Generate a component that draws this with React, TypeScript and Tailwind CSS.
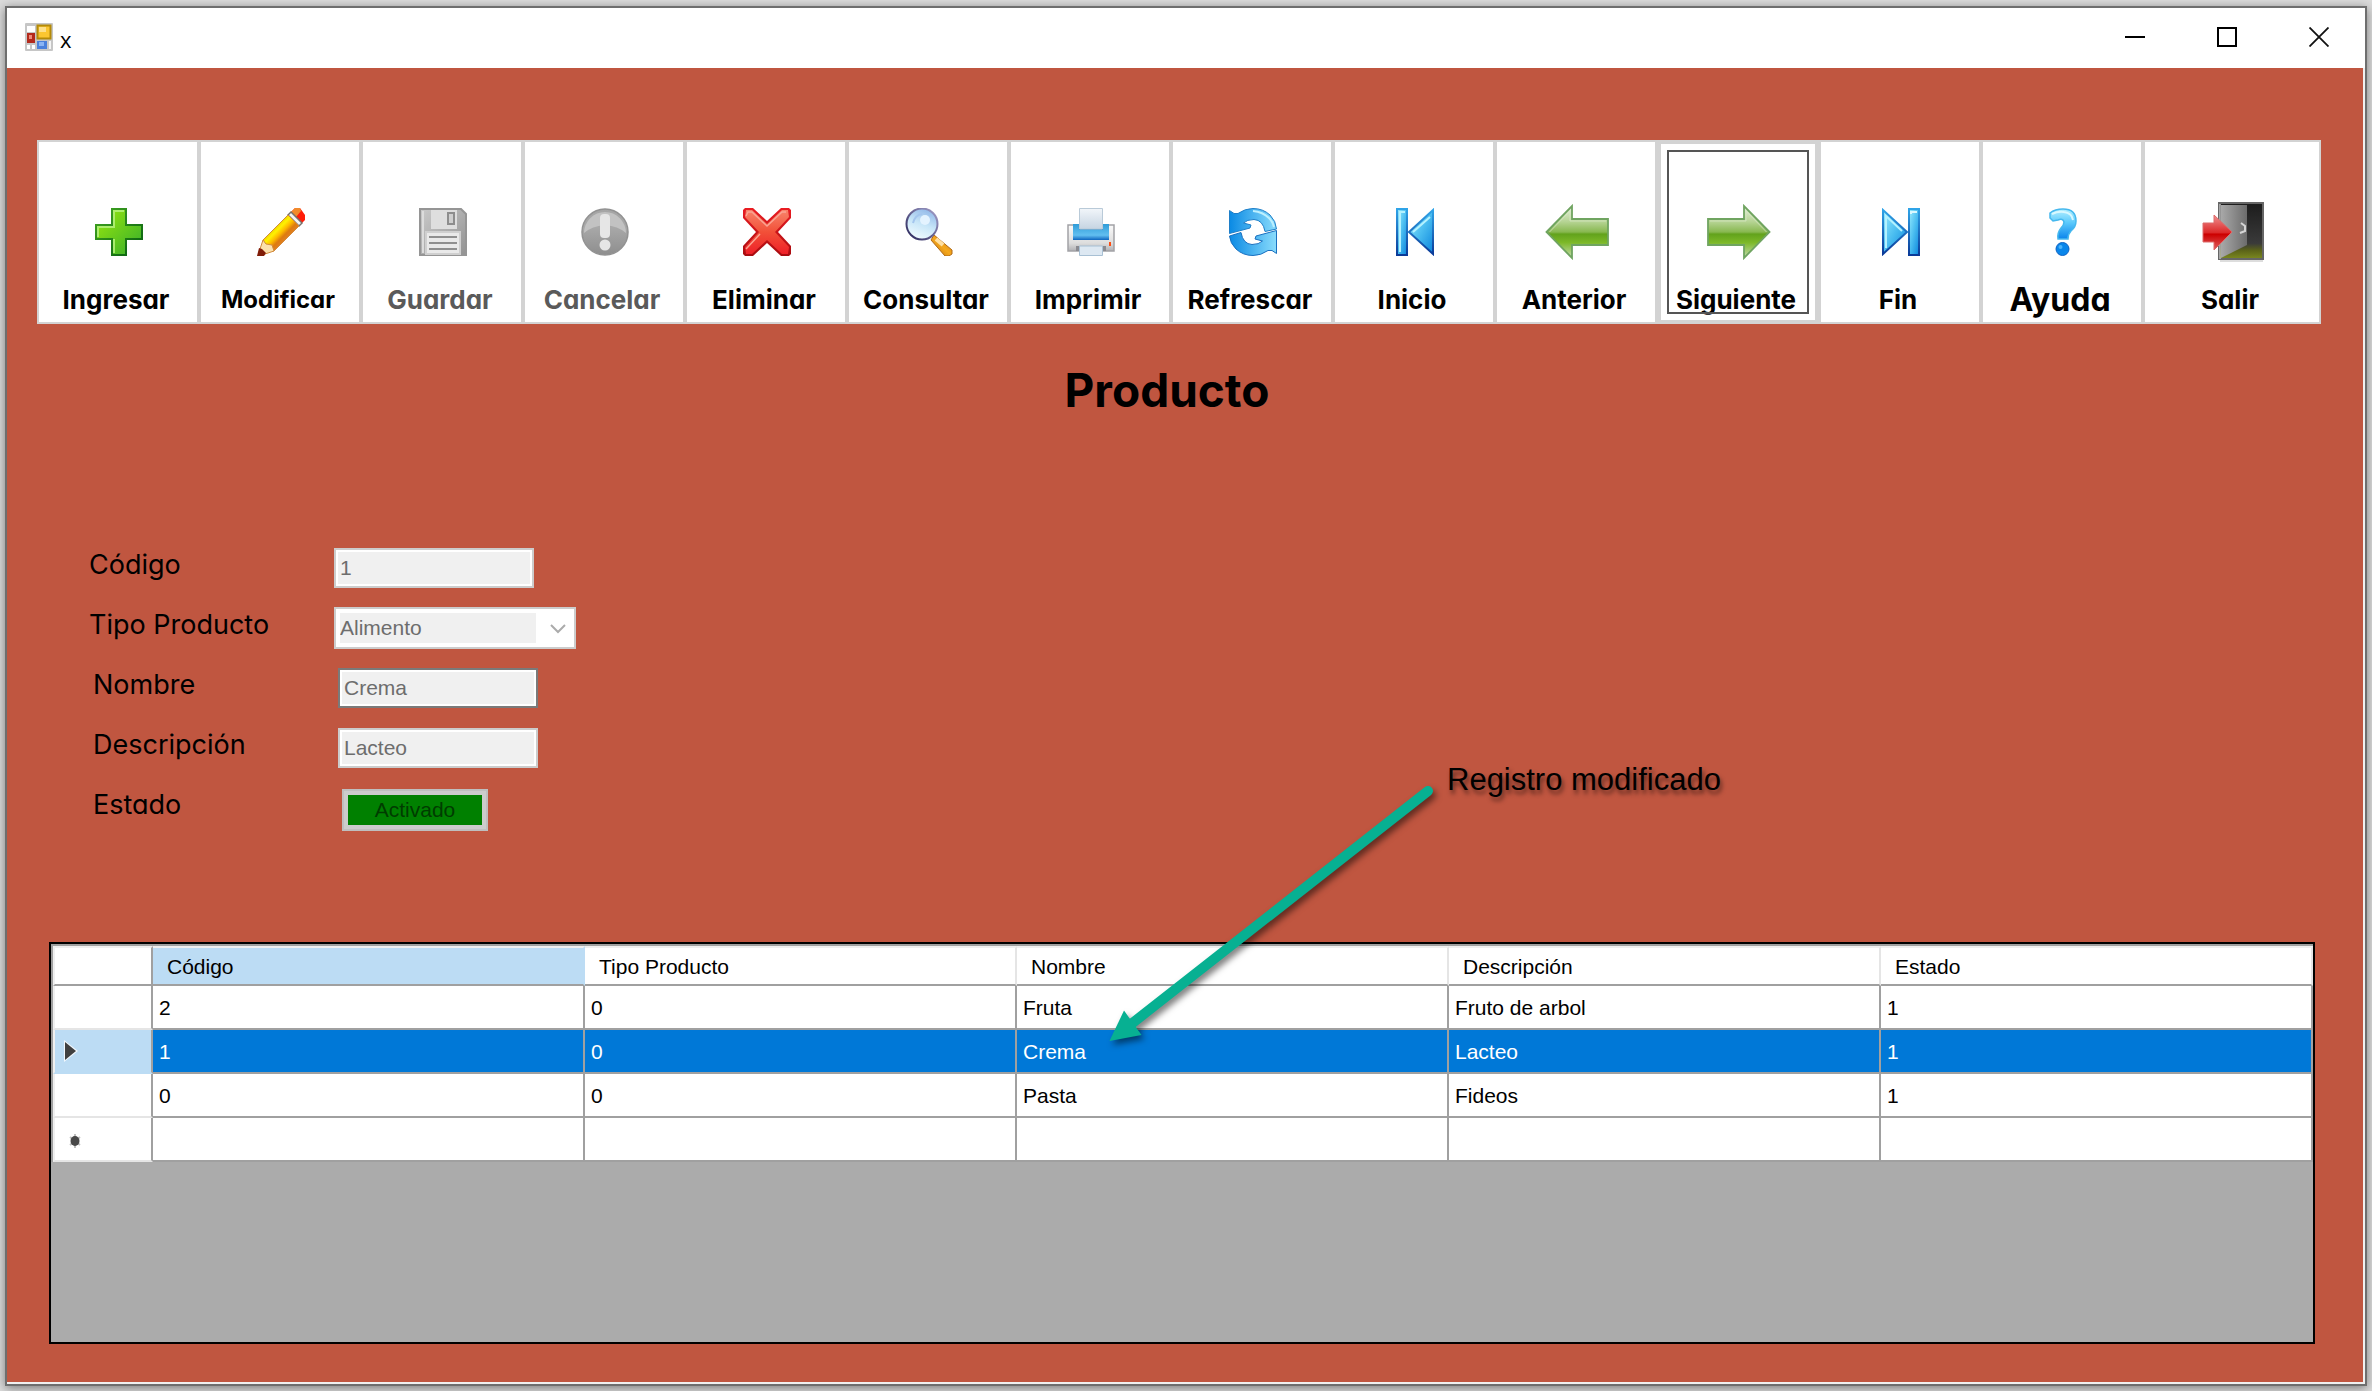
import React from "react";

type IconProps = { className?: string };

function PlusIcon() {
  return (
    <svg viewBox="0 0 48 48" className="size-12">
      <defs>
        <linearGradient id="plusFill" x1="0" y1="0" x2="1" y2="1">
          <stop offset="0" stopColor="#9dea0c" />
          <stop offset="1" stopColor="#34ac2c" />
        </linearGradient>
        <linearGradient id="plusEdge" x1="0" y1="0" x2="1" y2="1">
          <stop offset="0" stopColor="#43a822" />
          <stop offset="1" stopColor="#055c10" />
        </linearGradient>
      </defs>
      <path d="M17 1H31V17H47V31H31V47H17V31H1V17H17Z" fill="url(#plusFill)" stroke="url(#plusEdge)" strokeWidth="2" />
      <path d="M19 45V31M3 29V19H19V3H29" fill="none" stroke="#b5f27c" strokeWidth="2" opacity=".85" />
    </svg>
  );
}

function PencilIcon() {
  return (
    <svg viewBox="0 0 48 48" className="size-12">
      <defs>
        <linearGradient id="pencilBody" x1="17" y1="21" x2="28" y2="32" gradientUnits="userSpaceOnUse">
          <stop offset="0" stopColor="#f0d800" />
          <stop offset=".2" stopColor="#fff200" />
          <stop offset=".5" stopColor="#fdb800" />
          <stop offset=".75" stopColor="#dd7a10" />
          <stop offset="1" stopColor="#e08020" />
        </linearGradient>
      </defs>
      <path d="M34 4 38 0H43L48 7V12L42 18 31 8Z" fill="#ff1c08" />
      <path d="M34 4 38 0H43L44 3 39 9Z" fill="#f18a2c" />
      <path d="M31 7 34 4 45 15 42 18Z" fill="#f4f4f4" stroke="#77706a" strokeWidth="1.5" />
      <path d="M6 32 31 7 42 18 17 43 11 41Z" fill="url(#pencilBody)" stroke="#d28a3c" strokeWidth="1" />
      <path d="M6 32 2 44 5 47 17 43 15 37 9 36Z" fill="#fbe0ac" stroke="#d28a3c" strokeWidth="1" />
      <path d="M2 40 0 48H7L9 45 5 41Z" fill="#801c08" />
    </svg>
  );
}

function SaveIcon() {
  return (
    <svg viewBox="0 0 48 48" className="size-12">
      <defs>
        <linearGradient id="diskBody" x1="0" y1="0" x2="1" y2="1">
          <stop offset="0" stopColor="#cacaca" />
          <stop offset="1" stopColor="#929292" />
        </linearGradient>
      </defs>
      <path d="M1 1H42L47 6V47H1Z" fill="url(#diskBody)" stroke="#959595" strokeWidth="2" />
      <path d="M4 3V45" stroke="#dcdcdc" strokeWidth="2" />
      <rect x="12" y="2" width="26" height="19" fill="#dedede" />
      <rect x="29" y="5" width="6" height="11" fill="#cfcfcf" stroke="#8d8d8d" strokeWidth="2" />
      <rect x="7" y="24" width="34" height="22" fill="#e9e9e9" stroke="#cfcfcf" strokeWidth="2" />
      <path d="M10 29H38M10 35H38M10 41H38" stroke="#8f8f8f" strokeWidth="2" />
    </svg>
  );
}

function AlertIcon() {
  return (
    <svg viewBox="0 0 48 48" className="size-12">
      <defs>
        <linearGradient id="alertFill" x1="0" y1="0" x2="0" y2="1">
          <stop offset="0" stopColor="#a5a5a5" />
          <stop offset=".4" stopColor="#a8a8a8" />
          <stop offset="1" stopColor="#8e8e8e" />
        </linearGradient>
      </defs>
      <circle cx="24" cy="24" r="23" fill="url(#alertFill)" stroke="#929292" strokeWidth="1.5" />
      <path d="M3 25A21 21 0 0 1 45 25Q37 18 24 17 11 18 3 25Z" fill="#c2c2c2" />
      <rect x="19" y="6" width="10" height="24" rx="4" fill="#e6e6e6" />
      <circle cx="24" cy="37" r="5.5" fill="#e6e6e6" />
    </svg>
  );
}

function DeleteIcon() {
  return (
    <svg viewBox="0 0 48 48" className="size-12">
      <defs>
        <linearGradient id="xEdge" x1="0" y1="0" x2="0" y2="1">
          <stop offset="0" stopColor="#ea1c22" />
          <stop offset="1" stopColor="#a80c10" />
        </linearGradient>
        <linearGradient id="xFill" x1="0" y1="0" x2="0" y2="1">
          <stop offset="0" stopColor="#f8836a" />
          <stop offset=".5" stopColor="#f25038" />
          <stop offset="1" stopColor="#ee2028" />
        </linearGradient>
      </defs>
      <path d="M2 0H10L24 13 38 0H46L48 2V10L35 24 48 38V46L46 48H38L24 35 10 48H2L0 46V38L13 24 0 10V2Z" fill="url(#xEdge)" />
      <path d="M3 2H9L24 16 39 2H45L46 9 32 24 46 39 45 46H39L24 32 9 46H3L2 39 16 24 2 9Z" fill="url(#xFill)" />
      <path d="M3 8 5 4H9L24 18 39 4H43M3 41 17 26" fill="none" stroke="#fba493" strokeWidth="1.500" />
    </svg>
  );
}

function SearchIcon() {
  return (
    <svg viewBox="0 0 48 48" className="size-12">
      <defs>
        <linearGradient id="lens" x1=".7" y1="0" x2=".3" y2="1">
          <stop offset="0" stopColor="#8fb6e8" />
          <stop offset=".5" stopColor="#c8e6f8" />
          <stop offset="1" stopColor="#f2fcff" />
        </linearGradient>
        <linearGradient id="ring" x1="1" y1="0" x2="0" y2="1">
          <stop offset="0" stopColor="#a6a2cc" />
          <stop offset="1" stopColor="#262458" />
        </linearGradient>
        <linearGradient id="handle" x1="0" y1="1" x2="1" y2="0">
          <stop offset="0" stopColor="#b86a10" />
          <stop offset=".5" stopColor="#f5a81c" />
          <stop offset="1" stopColor="#d07a10" />
        </linearGradient>
      </defs>
      <path d="M29 27 47 42V46L44 48H40L26 32Z" fill="url(#handle)" stroke="#b06a18" strokeWidth="1" />
      <path d="M31 31 38 37" stroke="#ffdfa0" strokeWidth="4" />
      <circle cx="17" cy="16" r="15.5" fill="url(#lens)" stroke="url(#ring)" strokeWidth="2" />
      <circle cx="20" cy="12" r="5" fill="#e4f3ff" />
      <path d="M8 15Q10 7 17 6" fill="none" stroke="#a4c6ee" strokeWidth="2" />
    </svg>
  );
}

function PrintIcon() {
  return (
    <svg viewBox="0 0 48 48" className="size-12">
      <defs>
        <linearGradient id="paper" x1="0" y1="0" x2="0" y2="1">
          <stop offset="0" stopColor="#f2f6fa" />
          <stop offset="1" stopColor="#c6d4e2" />
        </linearGradient>
        <linearGradient id="shell" x1="0" y1="0" x2="0" y2="1">
          <stop offset="0" stopColor="#fafafa" />
          <stop offset=".7" stopColor="#dddddd" />
          <stop offset="1" stopColor="#b0b0b4" />
        </linearGradient>
        <linearGradient id="tray" x1="0" y1="0" x2="0" y2="1">
          <stop offset="0" stopColor="#2f9cd8" />
          <stop offset=".7" stopColor="#62bff0" />
          <stop offset="1" stopColor="#0e66c0" />
        </linearGradient>
      </defs>
      <path d="M1 17H47V43H1Z" fill="url(#shell)" stroke="#a2a2a6" strokeWidth="1.5" />
      <path d="M6 16H42V32H6Z" fill="url(#tray)" />
      <path d="M12 20H36" stroke="#1d76b8" strokeWidth="3" />
      <path d="M12.500 .5H35.500V21H12.500Z" fill="url(#paper)" stroke="#b9cad8" />
      <path d="M9 43V38H39V43" fill="#8a8a90" />
      <path d="M12.500 38H35.500V47.500H12.500Z" fill="#dde8f2" stroke="#a8c0d4" />
      <rect x="42" y="34" width="2" height="4" fill="#ff4c10" />
    </svg>
  );
}

function RefreshIcon() {
  return (
    <svg viewBox="0 0 48 48" className="size-12">
      <defs>
        <linearGradient id="refreshFill" x1="0" y1="0" x2="1" y2="0">
          <stop offset="0" stopColor="#0a8ae4" />
          <stop offset="1" stopColor="#8adcfc" />
        </linearGradient>
      </defs>
      <path
        d="M.5 2.500 5 5.500H9Q16 .5 24 .5 34 .5 41 7 47 13 47.500 21L36 23.500Q34 12 25 11.500 18 11.500 14.500 15L22 17 21 20 .5 25.500Z"
        fill="url(#refreshFill)"
        stroke="#1f7fc8"
      />
      <path
        d="M47.500 45.500 43 42.500H39Q32 47.500 24 47.500 14 47.500 7 41 1 35 .5 28L12 24.500Q14 36 23 36.500 30 36.500 33.500 33L26 31 27 28 47.500 22.500Z"
        fill="url(#refreshFill)"
        stroke="#1a70c0"
      />
      <path d="M24 3Q34 4 40 10 44 14 45 19" fill="none" stroke="#bdf0ff" strokeWidth="2" />
    </svg>
  );
}

function BlueGradients({ id }: { id: string }) {
  return (
    <defs>
      <linearGradient id={id + "Fill"} x1="0" y1="0" x2="1" y2="1">
        <stop offset="0" stopColor="#9aecfe" />
        <stop offset=".5" stopColor="#4abdf0" />
        <stop offset="1" stopColor="#0a84dc" />
      </linearGradient>
      <linearGradient id={id + "Edge"} x1="0" y1="0" x2="0" y2="1">
        <stop offset="0" stopColor="#2fa4e8" />
        <stop offset="1" stopColor="#0a3a98" />
      </linearGradient>
    </defs>
  );
}

function FirstIcon({ className }: IconProps) {
  return (
    <svg viewBox="0 0 38 48" className={className}>
      <BlueGradients id="first" />
      <path d="M1 1H11V47H1Z" fill="url(#firstFill)" stroke="url(#firstEdge)" strokeWidth="2" />
      <path d="M4 44V4H9" fill="none" stroke="#b4f2ff" strokeWidth="2" />
      <path d="M37 2V46L13 24Z" fill="url(#firstFill)" stroke="url(#firstEdge)" strokeWidth="2" />
      <path d="M34 9 17 24" fill="none" stroke="#b4f2ff" strokeWidth="2" />
    </svg>
  );
}

function LastIcon({ className }: IconProps) {
  return (
    <svg viewBox="0 0 38 48" className={className}>
      <BlueGradients id="last" />
      <path d="M27 1H37V47H27Z" fill="url(#lastFill)" stroke="url(#lastEdge)" strokeWidth="2" />
      <path d="M29 6V4H35" fill="none" stroke="#d8f8ff" strokeWidth="2" />
      <path d="M1 2V46L25 24Z" fill="url(#lastFill)" stroke="url(#lastEdge)" strokeWidth="2" />
      <path d="M4 40V8L20 23" fill="none" stroke="#b4f2ff" strokeWidth="2" />
    </svg>
  );
}

function ArrowIcon({ id, className }: IconProps & { id: string }) {
  return (
    <svg viewBox="0 0 64 56" className={className}>
      <defs>
        <linearGradient id={id} x1="0" y1="0" x2="0" y2="1">
          <stop offset="0" stopColor="#e6f0dc" />
          <stop offset=".3" stopColor="#b6d494" />
          <stop offset=".5" stopColor="#88b850" />
          <stop offset=".54" stopColor="#62a21c" />
          <stop offset=".7" stopColor="#7cb828" />
          <stop offset="1" stopColor="#c4dcb0" />
        </linearGradient>
      </defs>
      <path d="M1.500 28 27 2V15H63V41H27V54Z" fill={`url(#${id})`} stroke="#6fa460" strokeWidth="1.8" />
      <path d="M4.500 28 25 7V17H61" fill="none" stroke="#d8e8c8" opacity=".7" />
    </svg>
  );
}

function HelpIcon() {
  return (
    <svg viewBox="0 0 28 48" className="h-12 w-7">
      <defs>
        <linearGradient id="helpFill" x1="0" y1="0" x2="0" y2="1">
          <stop offset="0" stopColor="#b4f0ff" />
          <stop offset=".45" stopColor="#5ccafc" />
          <stop offset="1" stopColor="#0a84ec" />
        </linearGradient>
      </defs>
      <path
        d="M1 5Q6 1 14 1 27 1 27 13 27 19 22 23 19 26 19 31H9Q8 25 12 20 15 17 15 14 14 10 9 12L4 13 1 10Z"
        fill="url(#helpFill)"
        stroke="#45b8ee"
        strokeWidth="1.500"
      />
      <path d="M3 6Q9 3 15 4 23 5 24 12" fill="none" stroke="#d8f8ff" strokeWidth="2" />
      <circle cx="13.500" cy="41" r="6.500" fill="#0a86ea" stroke="#0c62c4" />
      <circle cx="11.500" cy="39" r="2" fill="#4cb4fa" />
    </svg>
  );
}

function ExitIcon() {
  return (
    <svg viewBox="0 0 62 60" className="h-[60px] w-[62px]">
      <defs>
        <linearGradient id="doorInside" x1="0" y1="0" x2="0" y2="1">
          <stop offset="0" stopColor="#1c1c1c" />
          <stop offset=".72" stopColor="#3a3a3a" />
          <stop offset=".85" stopColor="#5c6418" />
          <stop offset="1" stopColor="#7c8a20" />
        </linearGradient>
        <linearGradient id="doorLeaf" x1="0" y1="0" x2="1" y2="0">
          <stop offset="0" stopColor="#a8a8a8" />
          <stop offset="1" stopColor="#6c6c6c" />
        </linearGradient>
        <linearGradient id="exitArrow" x1="0" y1="0" x2="0" y2="1">
          <stop offset="0" stopColor="#f09090" />
          <stop offset=".5" stopColor="#dc2a2a" />
          <stop offset=".55" stopColor="#cc0000" />
          <stop offset="1" stopColor="#e06060" />
        </linearGradient>
      </defs>
      <rect x="18" y="58" width="43" height="2" fill="#dddddd" />
      <rect x="17" y="1" width="44" height="56" fill="url(#doorInside)" stroke="#666666" strokeWidth="2" />
      <path d="M19 3H45V43L19 56Z" fill="url(#doorLeaf)" />
      <path d="M18 2V57" stroke="#bcbcbc" strokeWidth="1.500" />
      <path d="M39 21 43 24V29L38 31" fill="none" stroke="#d4d4d4" strokeWidth="2" />
      <path d="M1 21H12V13L30 30 12 48V40H1Z" fill="url(#exitArrow)" stroke="#dd6a6a" />
    </svg>
  );
}

function AppIcon() {
  return (
    <svg viewBox="0 0 28 28" className="size-7" aria-hidden="true">
      <rect width="28" height="28" rx="1" fill="#c6c6c6" />
      <rect x="2" y="3" width="8" height="6" fill="#fff" />
      <rect x="2" y="22" width="3" height="4" fill="#fff" />
      <rect x="7" y="22" width="3" height="4" fill="#fff" />
      <rect x="24" y="18" width="2" height="8" fill="#f4f4f4" />
      <rect x="12.500" y="2.500" width="13" height="13" fill="#fbc630" stroke="#b48a08" strokeWidth="2" />
      <rect x="14" y="4" width="7" height="5" fill="#fde08a" />
      <rect x="2" y="10" width="8" height="10" fill="#b42a1c" />
      <rect x="4" y="12" width="3" height="4" fill="#ef8a7a" />
      <rect x="12" y="18" width="10" height="8" fill="#4a80dc" />
      <rect x="14" y="19" width="5" height="4" fill="#8ab4f4" />
    </svg>
  );
}

type Tool = {
  label: string;
  icon: React.ReactNode;
  size?: string;
  disabled?: boolean;
  focused?: boolean;
};

const tools: Tool[] = [
  { label: "Ingresar", icon: <PlusIcon /> },
  { label: "Modificar", icon: <PencilIcon />, size: "text-[24px]" },
  { label: "Guardar", icon: <SaveIcon />, disabled: true },
  { label: "Cancelar", icon: <AlertIcon />, disabled: true },
  { label: "Eliminar", icon: <DeleteIcon /> },
  { label: "Consultar", icon: <SearchIcon /> },
  { label: "Imprimir", icon: <PrintIcon /> },
  { label: "Refrescar", icon: <RefreshIcon /> },
  { label: "Inicio", icon: <FirstIcon className="h-12 w-[38px]" /> },
  { label: "Anterior", icon: <ArrowIcon id="prev" className="h-14 w-16" /> },
  { label: "Siguiente", icon: <ArrowIcon id="next" className="h-14 w-16 -scale-x-100" />, focused: true },
  { label: "Fin", icon: <LastIcon className="h-12 w-[38px]" /> },
  { label: "Ayuda", icon: <HelpIcon />, size: "text-[32px]" },
  { label: "Salir", icon: <ExitIcon /> },
];

function ToolButton({ label, icon, size = "text-[26px]", disabled, focused }: Tool) {
  return (
    <button
      type="button"
      disabled={disabled}
      className={`relative flex h-[184px] flex-col items-center justify-end border-[#d3d3d3] bg-white font-bold ${
        focused ? "border-4" : "border-2 pb-[2px]"
      } ${disabled ? "text-[#5a5a5a]" : "text-black"}`}
    >
      <span className="flex h-16 items-center justify-center pl-[2px]">{icon}</span>
      <span className={`mt-4 pr-1 leading-10 ${size}`}>{label}</span>
      {focused && <span className="absolute inset-[6px] border-2 border-[#555555]" />}
    </button>
  );
}

const columns = ["Código", "Tipo Producto", "Nombre", "Descripción", "Estado"];
const rows = [
  ["2", "0", "Fruta", "Fruto de arbol", "1"],
  ["1", "0", "Crema", "Lacteo", "1"],
  ["0", "0", "Pasta", "Fideos", "1"],
  ["", "", "", "", ""],
];
const selectedRow = 1;

function RowMarker({ index }: { index: number }) {
  if (index === selectedRow) {
    return (
      <svg viewBox="0 0 16 24" className="ml-2 h-6 w-4">
        <path d="M1 1 15 12 1 23Z" fill="#fff" opacity=".8" />
        <path d="M2 3 13 12 2 21Z" fill="#404040" />
      </svg>
    );
  }
  if (index === rows.length - 1) {
    return (
      <svg viewBox="0 0 12 14" className="mt-1 ml-[14px] h-[14px] w-3">
        <path d="M6 0V14M1 3 11 11M1 11 11 3" stroke="#c0c0c0" strokeWidth="2" />
        <ellipse cx="6" cy="7" rx="4.500" ry="5" fill="#484848" />
      </svg>
    );
  }
  return null;
}

function ProductTable() {
  return (
    <table className="w-full table-fixed border-separate border-spacing-0 border-t-2 border-l-2 border-[#a0a0a0] text-left text-[21px] text-black">
      <thead>
        <tr className="h-10">
          <th className="w-[100px] border-t-2 border-r-2 border-b-2 border-l-2 border-[#a0a0a0] border-t-[#f0f0f0] border-l-[#f0f0f0] bg-white" />
          {columns.map((name, i) => (
            <th
              key={name}
              scope="col"
              className={`border-t-2 border-r-2 border-b-2 border-t-[#f0f0f0] border-b-[#a0a0a0] pt-[2px] pb-0 pl-[14px] leading-6 font-normal ${
                i === 0 ? "border-r-[#bcdcf4] bg-[#bcdcf4]" : "border-r-[#e5e5e5] bg-white"
              }`}
            >
              {name}
            </th>
          ))}
        </tr>
      </thead>
      <tbody>
        {rows.map((row, r) => (
          <tr key={r} className={r === selectedRow ? "h-11 bg-[#0078d7] text-white" : "h-11 bg-white"}>
            <th
              className={`border-r-2 border-b-2 border-l-2 border-r-[#a0a0a0] border-l-[#f0f0f0] p-0 ${
                r === selectedRow ? "border-b-[#bcdcf4] bg-[#bcdcf4]" : "border-b-[#e5e5e5]"
              }`}
            >
              <RowMarker index={r} />
            </th>
            {row.map((cell, c) => (
              <td key={c} className="border-r-2 border-b-2 border-[#a0a0a0] pt-[2px] pb-0 pl-[6px] leading-6">
                {cell}
              </td>
            ))}
          </tr>
        ))}
      </tbody>
    </table>
  );
}

function Field({ id, label, indent, children }: { id: string; label: string; indent?: boolean; children: React.ReactNode }) {
  return (
    <div className={`flex h-[60px] items-center ${indent ? "pl-1" : ""}`}>
      <label htmlFor={id} className="w-[245px] pb-[6px] text-[27px] leading-8 text-black">
        {label}
      </label>
      {children}
    </div>
  );
}

function TextBox({ id, value, dark }: { id: string; value: string; dark?: boolean }) {
  return (
    <input
      id={id}
      type="text"
      disabled
      defaultValue={value}
      className={`h-10 w-[200px] border-2 bg-[#f0f0f0] px-1 font-['Liberation_Sans',sans-serif] text-[21px] text-[#6d6d6d] shadow-[inset_0_0_0_2px_white] ${
        dark ? "border-[#7a7a7a]" : "border-[#cccccc]"
      }`}
    />
  );
}

export default function App() {
  return (
    <div className="flex min-h-screen bg-[#dcdcdc] px-[5px] pt-[6px] pb-[5px] font-['Liberation_Sans',sans-serif]">
      <div className="flex flex-1 flex-col border-2 border-[#6e6e6e] bg-[#f0f0f0] shadow-[0_2px_10px_rgba(0,0,0,0.45)]">
        <header className="flex h-[60px] items-center bg-white pb-[2px] pl-[18px]">
          <AppIcon />
          <span className="ml-[7px] pt-1 font-['Open_Sans',sans-serif] text-[22px] leading-8 text-black">x</span>
          <div className="ml-auto flex">
            <button type="button" aria-label="Minimizar" className="flex h-14 w-[92px] items-center justify-center">
              <svg viewBox="0 0 20 20" className="size-5">
                <path d="M0 10H20" stroke="#000" strokeWidth="2" />
              </svg>
            </button>
            <button type="button" aria-label="Maximizar" className="flex h-14 w-[92px] items-center justify-center">
              <svg viewBox="0 0 20 20" className="size-5">
                <path d="M1 1H19V19H1Z" fill="none" stroke="#000" strokeWidth="2" />
              </svg>
            </button>
            <button type="button" aria-label="Cerrar" className="flex h-14 w-[92px] items-center justify-center">
              <svg viewBox="0 0 20 20" className="size-5">
                <path d="M.5 .5 19.500 19.500M19.500 .5 .5 19.500" stroke="#111" strokeWidth="1.800" />
              </svg>
            </button>
          </div>
        </header>

        <main className="relative mr-[2px] mb-[2px] flex flex-1 flex-col bg-[#c05640] pt-[72px] pb-[38px]">
          <div className="font-['Inter',sans-serif] [font-feature-settings:'cv11']">
            <nav className="mr-[42px] ml-[30px] grid grid-cols-[repeat(13,162fr)_178fr]">
              {tools.map((tool) => (
                <ToolButton key={tool.label} {...tool} />
              ))}
            </nav>

            <h1 className="mt-[38px] pr-9 text-center text-[46px] leading-[56px] font-bold text-black">Producto</h1>

            <form className="mt-[120px] pl-[82px]">
              <Field id="codigo" label="Código">
                <TextBox id="codigo" value="1" />
              </Field>
              <Field id="tipo" label="Tipo Producto">
                <div className="relative h-[42px] w-[242px] border-2 border-[#cccccc] bg-white py-1 pr-[38px] pl-1">
                  <select
                    id="tipo"
                    disabled
                    className="block h-full w-full appearance-none bg-[#f0f0f0] font-['Liberation_Sans',sans-serif] text-[21px] leading-[30px] text-[#6d6d6d] opacity-100"
                  >
                    <option>Alimento</option>
                  </select>
                  <svg viewBox="0 0 16 10" className="absolute top-[15px] right-2 h-[10px] w-4">
                    <path d="M1 1 8 8 15 1" fill="none" stroke="#ababab" strokeWidth="2" />
                  </svg>
                </div>
              </Field>
              <Field id="nombre" label="Nombre" indent>
                <TextBox id="nombre" value="Crema" dark />
              </Field>
              <Field id="descripcion" label="Descripción" indent>
                <TextBox id="descripcion" value="Lacteo" />
              </Field>
              <Field id="estado" label="Estado" indent>
                <button
                  id="estado"
                  type="button"
                  disabled
                  className="mt-1 ml-1 h-[42px] w-[146px] border-2 border-[#bfbfbf] bg-[#008000] font-['Liberation_Sans',sans-serif] text-[21px] text-[#003c00] shadow-[inset_0_0_0_4px_#cccccc]"
                >
                  Activado
                </button>
              </Field>
            </form>
          </div>

          <section className="mt-[104px] mr-12 ml-[42px] flex-1 border-2 border-black bg-[#ababab]">
            <ProductTable />
          </section>

          <p className="absolute top-[692px] left-[1440px] text-[31px] leading-[40px] text-black [text-shadow:2px_4px_4px_rgba(0,0,0,0.5)]">
            Registro modificado
          </p>
          <svg
            viewBox="0 0 340 272"
            className="pointer-events-none absolute top-[712px] left-[1093px] h-[272px] w-[340px] drop-shadow-[3px_4px_3px_rgba(0,0,0,0.5)]"
          >
            <path d="M328 11 30 245" stroke="#07b092" strokeWidth="10" strokeLinecap="round" />
            <path d="M9.500 261 24 230.500 41.500 255Z" fill="#07b092" />
          </svg>
        </main>
      </div>
    </div>
  );
}
